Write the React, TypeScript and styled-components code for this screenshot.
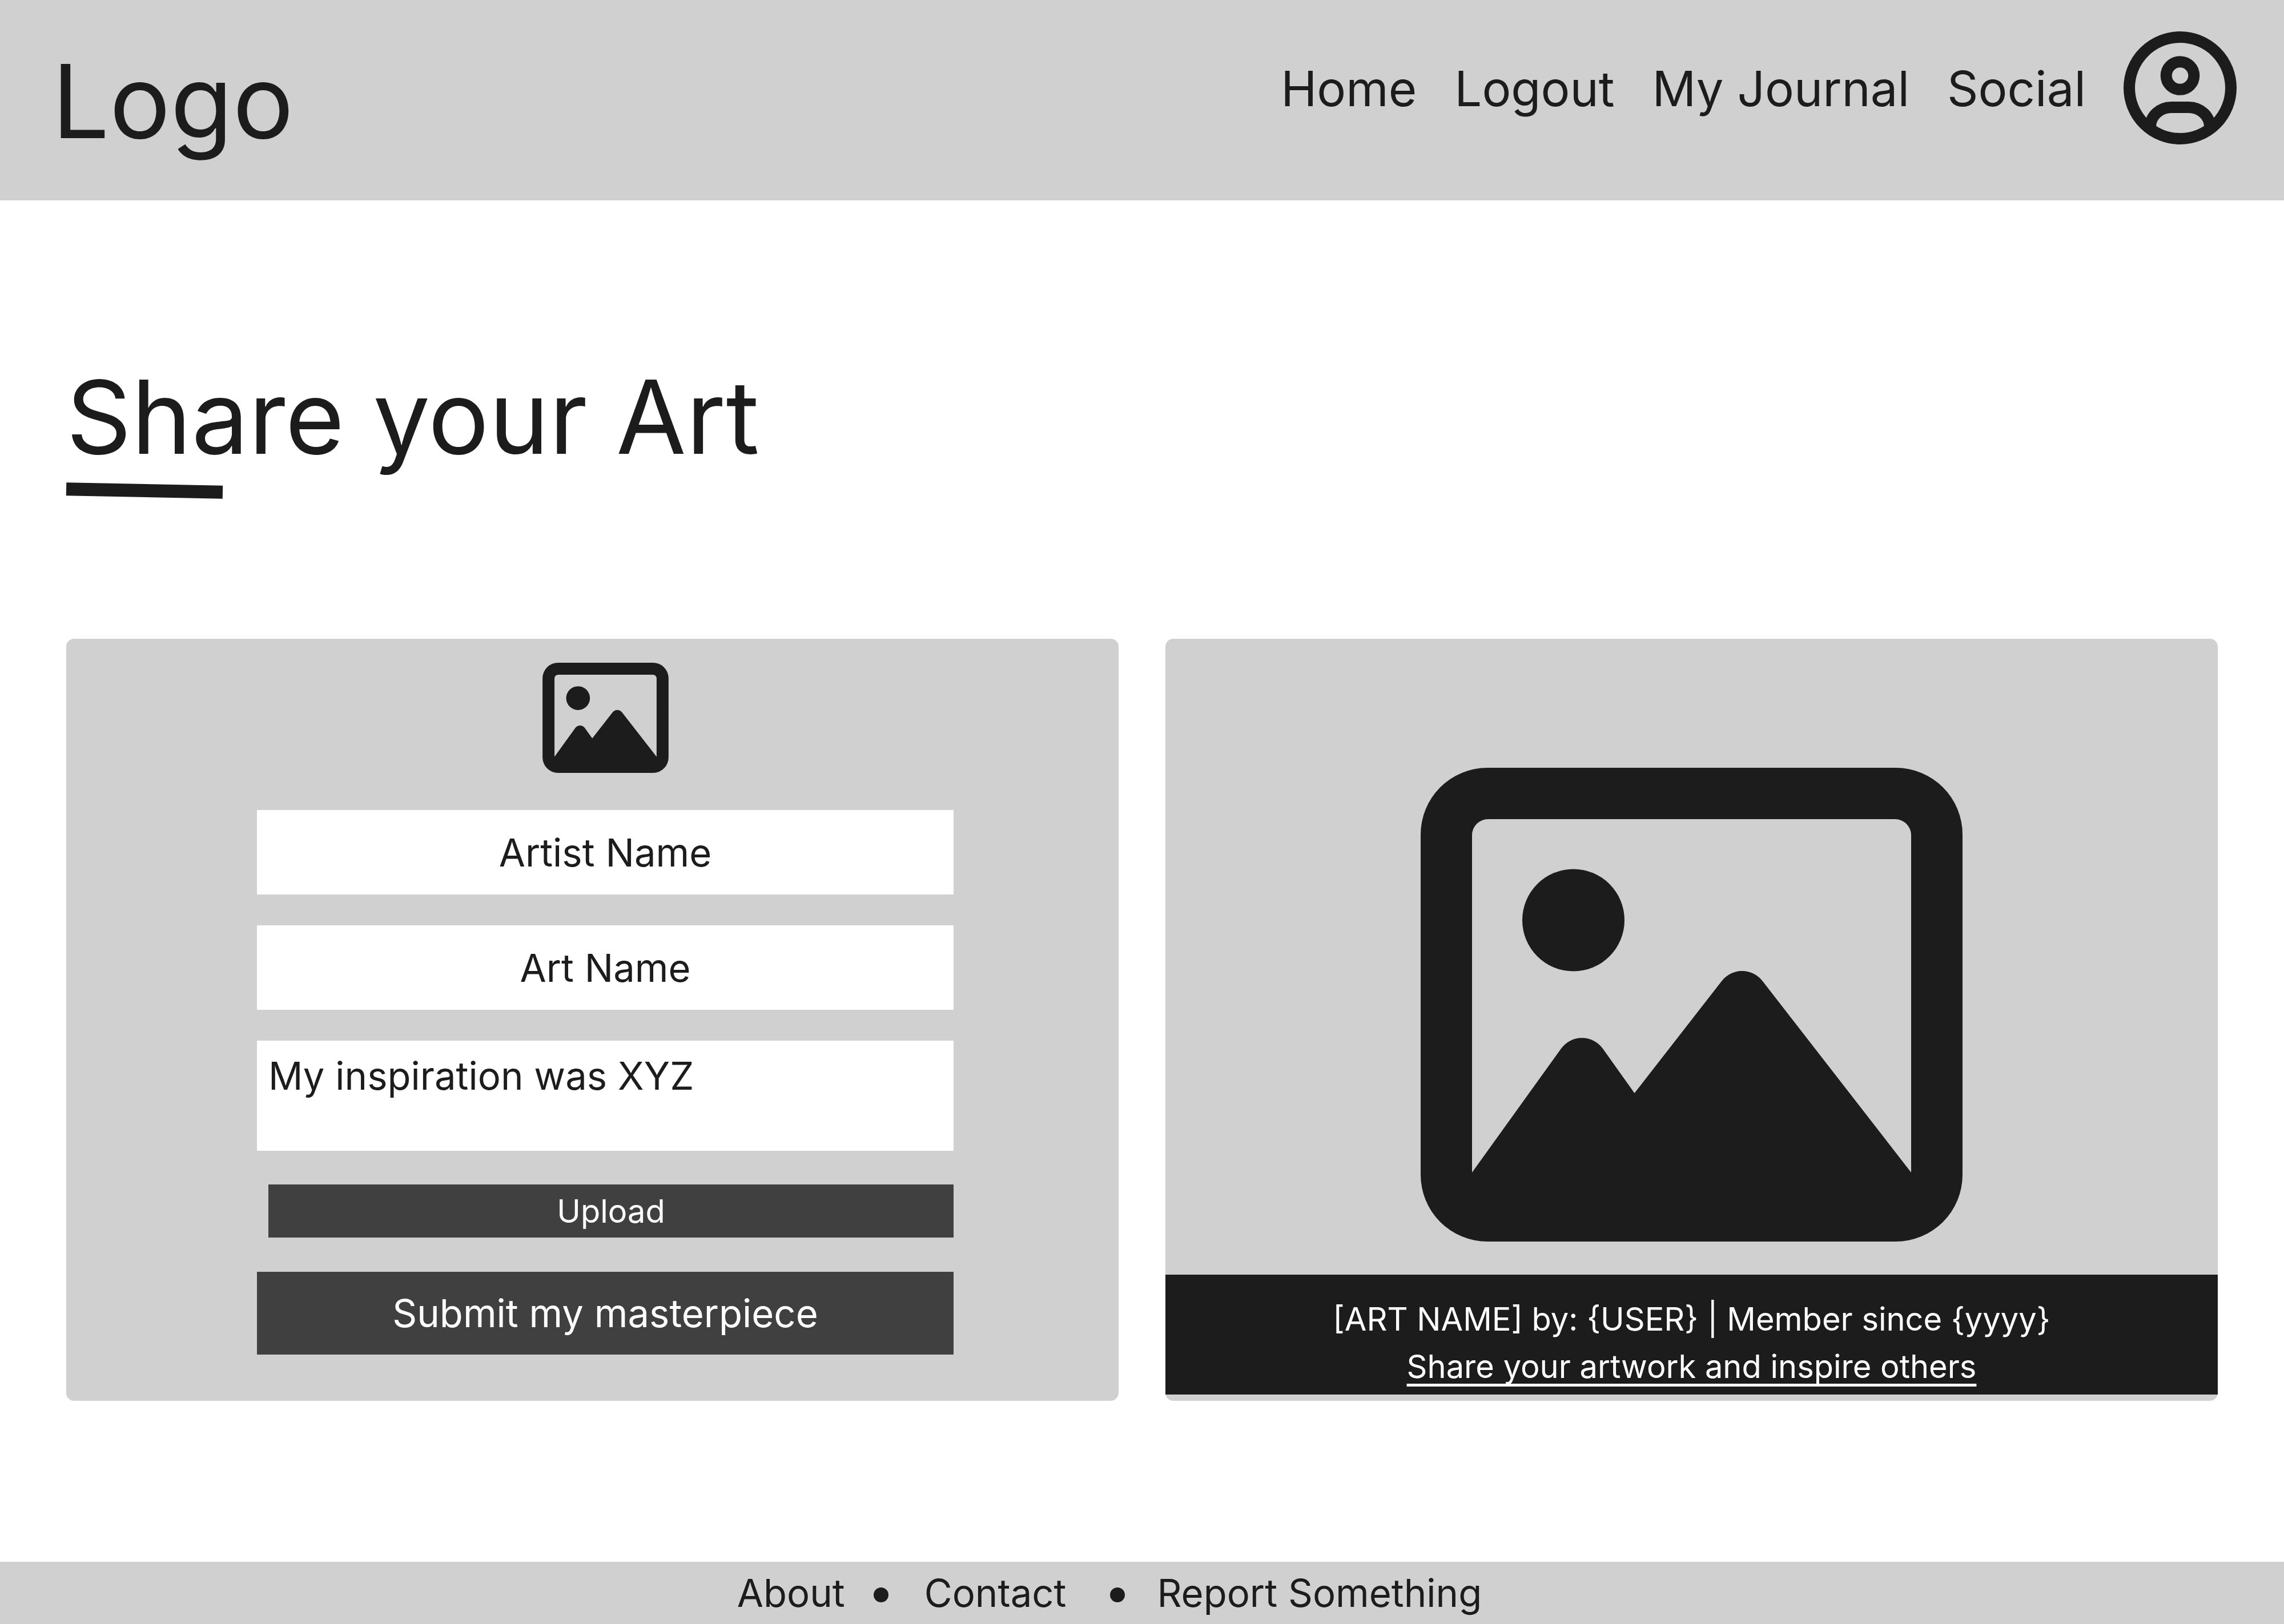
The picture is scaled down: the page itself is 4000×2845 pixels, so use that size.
import React from "react";
import styled, { createGlobalStyle } from "styled-components";

const ink = "#1c1c1c";
const panel = "#d0d0d0";
const action = "#404040";

const GlobalStyle = createGlobalStyle`
  *, *::before, *::after { box-sizing: border-box; }
  body {
    margin: 0;
    background: #ffffff;
    color: ${ink};
    font-family: Inter, "Liberation Sans", sans-serif;
    font-weight: 400;
    font-optical-sizing: none;
  }
`;

const Header = styled.header`
  display: flex;
  justify-content: space-between;
  align-items: flex-start;
  min-height: 351px;
  padding: 55px 83px 0 91px;
  background: ${panel};
`;

const Logo = styled.a`
  margin-top: 14px;
  color: inherit;
  font-size: 178px;
  line-height: 218px;
  text-decoration: none;
`;

const Nav = styled.nav`
  display: flex;
  align-items: center;
  gap: 66px;
`;

const NavLink = styled.a`
  padding-top: 4px;
  color: inherit;
  font-size: 85px;
  line-height: 104px;
  text-decoration: none;
`;

const ProfileButton = styled.button`
  display: flex;
  padding: 0;
  border: 0;
  background: none;
  color: inherit;
  cursor: pointer;
`;

const Main = styled.main`
  padding: 270px 116px 282px;
`;

const Title = styled.h1`
  margin: 0;
  font-size: 178px;
  font-weight: 400;
  line-height: 220px;
`;

const TitleMark = styled.div`
  width: 274px;
  height: 23px;
  margin: 7px 0 248px;
  background: ${ink};
  transform: rotate(1.2deg);
`;

const Columns = styled.div`
  display: grid;
  grid-template-columns: 1fr 1fr;
  gap: 82px;
`;

const FormCard = styled.form`
  display: grid;
  grid-template-columns: 334fr 1220fr 289fr;
  padding: 42px 0 81px;
  border-radius: 14px;
  background: ${panel};
`;

const Fields = styled.div`
  grid-column: 2;
  display: flex;
  flex-direction: column;
`;

const FormIcon = styled.div`
  display: flex;
  justify-content: center;
  margin-bottom: 65px;
`;

const TextField = styled.input`
  width: 100%;
  height: 148px;
  margin: 0 0 54px;
  padding: 0 20px;
  border: 0;
  border-radius: 0;
  background: #ffffff;
  color: ${ink};
  font: inherit;
  font-size: 67px;
  text-align: center;

  &::placeholder {
    color: ${ink};
    opacity: 1;
  }
`;

const Story = styled.textarea`
  display: block;
  width: 100%;
  height: 193px;
  margin: 0 0 59px;
  padding: 20px;
  border: 0;
  border-radius: 0;
  background: #ffffff;
  color: ${ink};
  font: inherit;
  font-size: 67px;
  line-height: 84px;
  resize: none;
  overflow: hidden;
`;

const UploadButton = styled.button`
  height: 93px;
  margin: 0 0 60px 20px;
  padding: 0;
  border: 0;
  background: ${action};
  color: #ffffff;
  font: inherit;
  font-size: 56px;
  cursor: pointer;
`;

const SubmitButton = styled.button`
  height: 145px;
  padding: 0;
  border: 0;
  background: ${action};
  color: #ffffff;
  font: inherit;
  font-size: 67px;
  cursor: pointer;
`;

const PreviewCard = styled.figure`
  display: flex;
  flex-direction: column;
  justify-content: flex-end;
  align-items: center;
  gap: 58px;
  margin: 0;
  padding-bottom: 11px;
  border-radius: 14px;
  background: ${panel};
`;

const Caption = styled.figcaption`
  display: flex;
  flex-direction: column;
  align-items: center;
  align-self: stretch;
  padding: 37px 0 7px;
  background: ${ink};
  color: #ffffff;
  font-size: 56px;
  line-height: 83px;
`;

const CaptionLink = styled.a`
  color: inherit;
  text-decoration: underline;
  text-decoration-thickness: 5px;
  text-decoration-skip-ink: none;
  text-underline-offset: 10px;
`;

const Footer = styled.footer`
  display: flex;
  justify-content: center;
  align-items: center;
  height: 109px;
  padding-right: 114px;
  background: ${panel};
  font-size: 67px;
  line-height: 84px;
`;

const FooterLink = styled.a`
  color: inherit;
  text-decoration: none;
`;

const Dot = styled.span<{ $before: number; $after: number }>`
  width: 26px;
  height: 26px;
  margin: 6px ${(p) => p.$after}px 0 ${(p) => p.$before}px;
  border-radius: 50%;
  background: ${ink};
`;

function ProfileIcon() {
  return (
    <svg width="198" height="198" viewBox="0 0 198 198" fill="none" stroke="currentColor" strokeWidth="20" aria-hidden="true">
      <circle cx="99" cy="99" r="89" />
      <circle cx="99" cy="77.5" r="24.3" />
      <path d="M47 167A37 34 0 0 1 84 133H114A37 34 0 0 1 151 167" />
    </svg>
  );
}

function PictureIcon({ width, height }: { width: number; height: number }) {
  return (
    <svg width={width} height={height} viewBox="0 0 949 830" fill={ink} aria-hidden="true">
      <path
        fillRule="evenodd"
        d="M117 0H832A117 117 0 0 1 949 117V713A117 117 0 0 1 832 830H117A117 117 0 0 1 0 713V117A117 117 0 0 1 117 0ZM118 90A28 28 0 0 0 90 118V709L246 492A45 45 0 0 1 319 492L374.500 570L527 374A45 45 0 0 1 599 374L859 709V118A28 28 0 0 0 831 90Z"
      />
      <circle cx="267.500" cy="267" r="89.500" />
    </svg>
  );
}

const navItems = ["Home", "Logout", "My Journal", "Social"];

export default function App() {
  return (
    <>
      <GlobalStyle />
      <Header>
        <Logo href="#">Logo</Logo>
        <Nav>
          {navItems.map((item) => (
            <NavLink key={item} href="#">
              {item}
            </NavLink>
          ))}
          <ProfileButton type="button" aria-label="Profile">
            <ProfileIcon />
          </ProfileButton>
        </Nav>
      </Header>

      <Main>
        <Title>Share your Art</Title>
        <TitleMark />
        <Columns>
          <FormCard onSubmit={(e) => e.preventDefault()}>
            <Fields>
              <FormIcon>
                <PictureIcon width={221} height={193} />
              </FormIcon>
              <TextField type="text" aria-label="Artist Name" placeholder="Artist Name" />
              <TextField type="text" aria-label="Art Name" placeholder="Art Name" />
              <Story aria-label="Inspiration" defaultValue="My inspiration was XYZ" />
              <UploadButton type="button">Upload</UploadButton>
              <SubmitButton type="submit">Submit my masterpiece</SubmitButton>
            </Fields>
          </FormCard>

          <PreviewCard>
            <PictureIcon width={949} height={830} />
            <Caption>
              <span>{"[ART NAME] by: {USER} | Member since {yyyy}"}</span>
              <CaptionLink href="#">Share your artwork and inspire others</CaptionLink>
            </Caption>
          </PreviewCard>
        </Columns>
      </Main>

      <Footer>
        <FooterLink href="#">About</FooterLink>
        <Dot $before={50} $after={63} />
        <FooterLink href="#">Contact</FooterLink>
        <Dot $before={77} $after={56} />
        <FooterLink href="#">Report Something</FooterLink>
      </Footer>
    </>
  );
}
